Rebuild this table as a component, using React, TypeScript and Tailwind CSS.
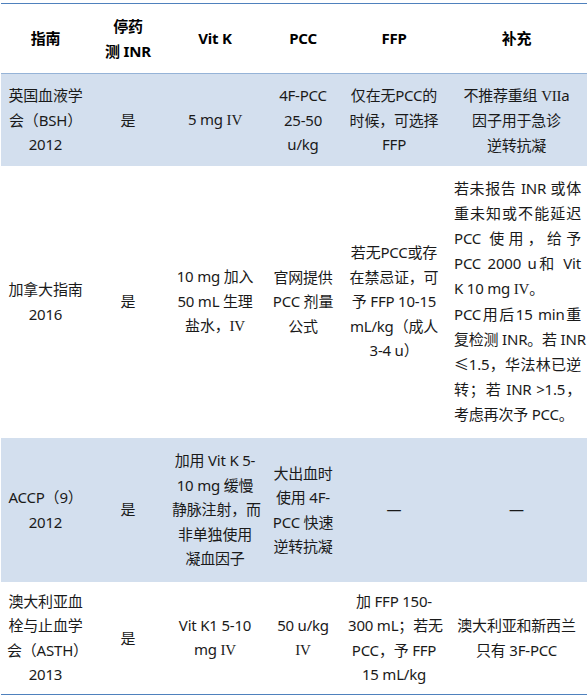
const font = { fontFamily: '"Noto Sans", "Noto Sans CJK SC", sans-serif' }

function R({ children }: { children: React.ReactNode }) {
  // roman numerals in the source render in a serif face
  return <span className="font-['Liberation_Serif',serif]">{children}</span>
}

function J({ children, last }: { children: React.ReactNode; last?: boolean }) {
  return (
    <div className={last ? "text-left" : "text-justify [text-align-last:justify]"}>{children}</div>
  )
}

const cell = "px-[6px] text-center align-middle whitespace-nowrap"

export default function App() {
  return (
    <div className="bg-white w-[588px] h-[697px] pt-[3px] overflow-hidden" style={font}>
      <table className="ml-[1px] w-[586px] table-fixed border-collapse text-[15px] leading-[24.5px] tracking-[-0.2px] text-[#1a1a1a]">
        <colgroup>
          <col className="w-[89px]" />
          <col className="w-[76px]" />
          <col className="w-[98px]" />
          <col className="w-[78px]" />
          <col className="w-[104px]" />
          <col className="w-[141px]" />
        </colgroup>
        <thead>
          <tr className="h-[70px] border-t border-t-[#4f81bd] border-b border-b-[#95b3d7] font-bold text-black leading-[25px]">
            <th className={cell}>指南</th>
            <th className={cell}>
              停药
              <br />
              测 INR
            </th>
            <th className={cell}>Vit K</th>
            <th className={cell}>PCC</th>
            <th className={cell}>FFP</th>
            <th className={cell}>补充</th>
          </tr>
        </thead>
        <tbody>
          <tr className="h-[92px] bg-[#d3dfee]">
            <td className={cell}>
              英国血液学
              <br />
              会（BSH）
              <br />
              2012
            </td>
            <td className={cell}>是</td>
            <td className={cell}>
              5 mg <R>IV</R>
            </td>
            <td className={cell}>
              4F-PCC
              <br />
              25-50
              <br />
              u/kg
            </td>
            <td className={cell}>
              仅在无PCC的
              <br />
              时候，可选择
              <br />
              FFP
            </td>
            <td className={cell}>
              不推荐重组 <R>VII</R>a
              <br />
              因子用于急诊
              <br />
              逆转抗凝
            </td>
          </tr>
          <tr className="h-[272px]">
            <td className={cell}>
              加拿大指南
              <br />
              2016
            </td>
            <td className={cell}>是</td>
            <td className={cell}>
              10 mg 加入
              <br />
              50 mL 生理
              <br />
              盐水，<R>IV</R>
            </td>
            <td className={cell}>
              官网提供
              <br />
              PCC 剂量
              <br />
              公式
            </td>
            <td className={cell}>
              若无PCC或存
              <br />
              在禁忌证，可
              <br />
              予 FFP 10-15
              <br />
              mL/kg（成人
              <br />
              3-4 u）
            </td>
            <td className="pl-[8px] pr-[6px] align-middle leading-[25px] whitespace-nowrap">
              <J>若未报告 INR 或体</J>
              <J>重未知或不能延迟</J>
              <J>PCC 使用，给予</J>
              <J>PCC 2000 u和 Vit</J>
              <J last>
                K 10 mg <R>IV</R>。
              </J>
              <J>PCC用后15 min重</J>
              <J>复检测 INR。若 INR</J>
              <J>≤1.5，华法林已逆</J>
              <J>转；若 INR &gt;1.5，</J>
              <J last>考虑再次予 PCC。</J>
            </td>
          </tr>
          <tr className="h-[144px] bg-[#d3dfee]">
            <td className={cell}>
              ACCP（9）
              <br />
              2012
            </td>
            <td className={cell}>是</td>
            <td className={cell}>
              加用 Vit K 5-
              <br />
              10 mg 缓慢
              <br />
              静脉注射，而
              <br />
              非单独使用
              <br />
              凝血因子
            </td>
            <td className={cell}>
              大出血时
              <br />
              使用 4F-
              <br />
              PCC 快速
              <br />
              逆转抗凝
            </td>
            <td className={cell}>—</td>
            <td className={cell}>—</td>
          </tr>
          <tr className="h-[113px] border-b border-b-[#4f81bd]">
            <td className={cell}>
              澳大利亚血
              <br />
              栓与止血学
              <br />
              会（ASTH）
              <br />
              2013
            </td>
            <td className={cell}>是</td>
            <td className={cell}>
              Vit K1 5-10
              <br />
              mg <R>IV</R>
            </td>
            <td className={cell}>
              50 u/kg
              <br />
              <R>IV</R>
            </td>
            <td className={cell}>
              加 FFP 150-
              <br />
              300 mL；若无
              <br />
              PCC，予 FFP
              <br />
              15 mL/kg
            </td>
            <td className={cell}>
              澳大利亚和新西兰
              <br />
              只有 3F-PCC
            </td>
          </tr>
        </tbody>
      </table>
    </div>
  )
}
